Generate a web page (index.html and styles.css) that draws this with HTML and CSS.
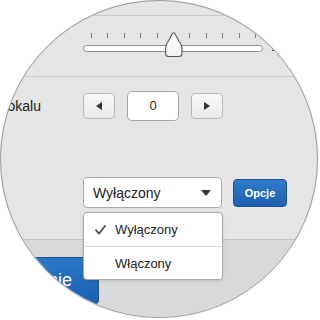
FILE: index.html
```html
<!DOCTYPE html>
<html lang="pl">
<head>
<meta charset="utf-8">
<link rel="stylesheet" href="styles.css">
</head>
<body>
<div class="lens">
  <div class="sec-top"></div>
  <div class="sec-slider">
    <div class="slider">
      <div class="ticks">
        <i></i><i></i><i></i><i></i><i></i><i class="hidden"></i><i></i><i></i><i></i><i></i><i></i>
      </div>
      <div class="track"></div>
      <svg class="thumb" width="18" height="26" viewBox="0 0 18 26">
        <defs>
          <linearGradient id="tg" x1="0" y1="0" x2="0" y2="1">
            <stop offset="0" stop-color="#ffffff"/>
            <stop offset="1" stop-color="#f1f1f1"/>
          </linearGradient>
        </defs>
        <path d="M8.5 0.8 C9 0.8 9.4 1.2 9.8 1.8 L16 12.6 C16.6 13.6 16.9 14.6 16.9 16 V21.5 C16.9 23.2 15.6 24.5 13.9 24.5 H3.5 C1.8 24.5 0.6 23.2 0.6 21.5 V16 C0.6 14.6 0.9 13.6 1.5 12.6 L7.3 1.8 C7.6 1.2 8 0.8 8.5 0.8 Z" fill="url(#tg)" stroke="#5a5a5a" stroke-width="1.1"/>
      </svg>
    </div>
    <span class="slider-value">1</span>
  </div>
  <div class="sec-form">
    <div class="row row-stepper">
      <label class="label">lokalu</label>
      <div class="stepper">
        <button class="step-btn" type="button"><span class="arrow-left"></span></button>
        <div class="step-input">0</div>
        <button class="step-btn" type="button"><span class="arrow-right"></span></button>
      </div>
    </div>
    <div class="row row-select">
      <div class="label"></div>
      <div class="select-wrap">
        <div class="select">
          <span>Wyłączony</span>
          <span class="caret"></span>
        </div>
        <div class="menu">
          <div class="menu-item">
            <svg class="check" width="11" height="10" viewBox="0 0 11 10"><path d="M1 5.2 L4 8.6 L10 1" fill="none" stroke="#505050" stroke-width="1.9" stroke-linecap="round" stroke-linejoin="round"/></svg>
            Wyłączony
          </div>
          <div class="menu-item">Włączony</div>
        </div>
      </div>
      <button class="btn-blue" type="button">Opcje</button>
    </div>
  </div>
  <div class="sec-bottom">
    <div class="big-blue"><span>Ustawienie</span></div>
  </div>
</div>
</body>
</html>
```
FILE: styles.css
```css
* { box-sizing: border-box; }
html, body { margin: 0; padding: 0; background: #ffffff; }
body { font-family: "Liberation Sans", Arial, sans-serif; color: #222; }

.lens {
  position: relative;
  width: 318px;
  height: 318px;
  border: 1px solid #9c9c9c;
  border-radius: 50%;
  overflow: hidden;
  background: #e5e5e5;
  box-shadow: 0 0 2px rgba(0,0,0,0.15);
  display: flex;
  flex-direction: column;
}

.sec-top {
  flex: none;
  height: 15px;
  border-bottom: 1px solid #c9c9c9;
}

.sec-slider {
  flex: none;
  height: 61px;
  border-bottom: 1px solid #c9c9c9;
  display: flex;
  align-items: flex-start;
  padding-top: 17px;
  padding-left: 82px;
}

.slider {
  position: relative;
  width: 180px;
}

.ticks {
  display: flex;
  justify-content: space-between;
  height: 5px;
  padding: 0 7px 0 8px;
}
.ticks i {
  display: block;
  width: 1px;
  height: 5px;
  background: #808080;
}
.ticks i.hidden { visibility: hidden; }

.track {
  margin-top: 7px;
  height: 7px;
  background: #fff;
  border: 1px solid #8f8f8f;
  border-radius: 4px;
}

.thumb {
  position: absolute;
  left: 82px;
  top: -1px;
  display: block;
}

.slider-value {
  margin-left: 8px;
  margin-top: 6px;
  font-size: 13px;
  line-height: 16px;
  color: #222;
}

.sec-form {
  flex: none;
  height: 163px;
  border-bottom: 1px solid #c4c4c4;
  padding-top: 14px;
}

.row {
  display: flex;
  align-items: center;
}
.label {
  flex: none;
  width: 82px;
  padding-right: 42px;
  text-align: right;
  font-size: 14px;
  color: #222;
  white-space: nowrap;
}

.stepper {
  display: flex;
  align-items: center;
  gap: 12px;
}
.step-btn {
  width: 32px;
  height: 26px;
  padding: 0;
  border: 1px solid #b9b9b9;
  border-radius: 4px;
  background: linear-gradient(#f8f8f8, #e9e9e9);
  display: flex;
  align-items: center;
  justify-content: center;
}
.arrow-left {
  width: 0; height: 0;
  border-top: 4px solid transparent;
  border-bottom: 4px solid transparent;
  border-right: 6px solid #333;
}
.arrow-right {
  width: 0; height: 0;
  border-top: 4px solid transparent;
  border-bottom: 4px solid transparent;
  border-left: 6px solid #333;
}
.step-input {
  width: 52px;
  height: 30px;
  border: 1px solid #a9a9a9;
  border-radius: 5px;
  background: #fff;
  font-size: 13px;
  line-height: 28px;
  text-align: center;
  color: #3a2a10;
}

.row-select { margin-top: 56px; }

.select-wrap {
  position: relative;
  flex: none;
}
.select {
  width: 139px;
  height: 31px;
  border: 1px solid #ababab;
  border-radius: 4px;
  background: #fff;
  display: flex;
  align-items: center;
  justify-content: space-between;
  padding: 0 10px 0 9px;
  font-size: 14px;
  color: #222;
}
.caret {
  width: 0; height: 0;
  border-left: 5px solid transparent;
  border-right: 5px solid transparent;
  border-top: 6px solid #333;
}

.menu {
  position: absolute;
  left: 0;
  top: 35px;
  width: 140px;
  background: #fff;
  border: 1px solid #ababab;
  border-radius: 4px;
  box-shadow: 0 1px 3px rgba(0,0,0,0.12);
  z-index: 2;
}
.menu-item {
  height: 33px;
  display: flex;
  align-items: center;
  padding-left: 31px;
  position: relative;
  font-size: 13px;
  color: #222;
}
.menu-item + .menu-item { border-top: 1px solid #dcdcdc; }
.check {
  position: absolute;
  left: 11px;
  top: 12px;
}

.btn-blue {
  margin-left: 11px;
  width: 54px;
  height: 28px;
  padding: 0;
  border: 1px solid #1b5598;
  border-radius: 4px;
  background: linear-gradient(#2f7ac9, #1c61b0);
  color: #fff;
  font-family: "Liberation Sans", Arial, sans-serif;
  font-size: 11px;
  font-weight: bold;
}

.sec-bottom {
  flex: 1;
  background: #d9d9d9;
  padding-top: 17px;
}
.big-blue {
  width: 98px;
  height: 47px;
  border: 1px solid #1b5598;
  border-left: none;
  border-radius: 0 4px 4px 0;
  background: linear-gradient(#2b77c8, #1a5fae);
  color: #fff;
  font-size: 18px;
  display: flex;
  align-items: center;
  justify-content: flex-end;
  padding-right: 26px;
  white-space: nowrap;
}
```
